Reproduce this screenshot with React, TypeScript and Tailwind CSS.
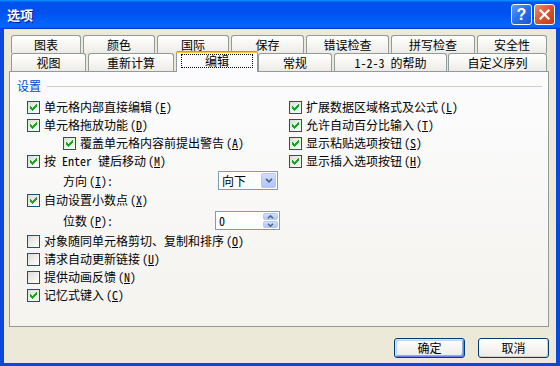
import type { ReactNode } from "react";

const checkPixels = ["......#", ".....##", "#...###", "##.###.", "#####..", ".###...", "..#...."];

function Check() {
  return (
    <svg width="7" height="7" viewBox="0 0 7 7" shapeRendering="crispEdges">
      {checkPixels.flatMap((row, y) =>
        row.split("").map((c, x) =>
          c === "#" ? <rect key={`${x}-${y}`} x={x} y={y} width="1" height="1" fill="#21A121" /> : null,
        ),
      )}
    </svg>
  );
}

function Box({ on }: { on?: boolean }) {
  return (
    <span className="flex h-[13px] w-[13px] shrink-0 items-center justify-center border border-[#1C5180] bg-gradient-to-br from-[#DCDCD7] to-white">
      {on && <Check />}
    </span>
  );
}

function Key({ k, colon }: { k: string; colon?: boolean }) {
  return (
    <span className="ml-[2px]">
      (<span className="underline underline-offset-1">{k}</span>){colon ? ":" : ""}
    </span>
  );
}

function Item({ on, text, k, className = "" }: { on?: boolean; text: string; k: string; className?: string }) {
  return (
    <div className={`flex h-[18px] items-center ${className}`}>
      <Box on={on} />
      <span className="ml-[4px] whitespace-nowrap">
        {text}
        <Key k={k} />
      </span>
    </div>
  );
}

function Tab({ children, className = "" }: { children: ReactNode; className?: string }) {
  return (
    <div
      className={`flex h-full items-center justify-center rounded-t-[3px] border border-b-0 border-[#919B9C] bg-gradient-to-b from-white via-[#F7F6F2] to-[#ECEBE6] ${className}`}
    >
      {children}
    </div>
  );
}

function Button({ children, def }: { children: ReactNode; def?: boolean }) {
  return (
    <div
      className={`flex h-[20px] w-[71px] items-center justify-center rounded-[3px] border border-[#003C74] bg-gradient-to-b from-white to-[#ECEBE6] ${
        def
          ? "shadow-[inset_1px_1px_0_0_#CEE7FF,inset_-1px_-1px_0_0_#6982EE,inset_2px_2px_0_0_#BCD4F6,inset_-2px_-2px_0_0_#89ADE4]"
          : "shadow-[inset_-1px_-1px_0_0_#D6D0C5]"
      }`}
    >
      {children}
    </div>
  );
}

export default function App() {
  return (
    <div className="flex h-[366px] w-[560px] flex-col bg-[#0848DC] font-['Noto_Sans_Mono_CJK_SC','Noto_Sans_CJK_SC',sans-serif] text-[12px] leading-none text-black">
      {/* title bar */}
      <div className="flex h-[29px] shrink-0 items-center bg-[linear-gradient(180deg,#0997FF,#0053EE_8%,#0050EE_40%,#0066FF_88%,#0066FF_93%,#005BFF_95%,#003DD7_96%,#003DD7)] pl-[7px] pr-[5px]">
        <span className="text-[13px] font-bold text-white [text-shadow:1px_1px_0_#0F1089]">选项</span>
        <div className="ml-auto flex gap-[2px]">
          <div className="flex h-[21px] w-[21px] items-center justify-center rounded-[3px] border border-white bg-gradient-to-br from-[#5A9BFF] via-[#2A6EEA] to-[#1E55D0] font-['Liberation_Sans',sans-serif] text-[16px] font-bold text-white">
            ?
          </div>
          <div className="flex h-[21px] w-[21px] items-center justify-center rounded-[3px] border border-white bg-gradient-to-br from-[#E98E70] via-[#D9532C] to-[#C1391A]">
            <svg width="11" height="11" viewBox="0 0 11 11">
              <path d="M1.5 1.5 L9.5 9.5 M9.5 1.5 L1.5 9.5" stroke="white" strokeWidth="2.2" strokeLinecap="square" />
            </svg>
          </div>
        </div>
      </div>

      {/* client area */}
      <div className="mx-[4px] mb-[3px] flex flex-1 flex-col bg-[#ECE9D8] pt-[6px]">
        <div className="ml-[7px] flex h-[18px] gap-[2px]">
          <Tab className="w-[70px]">图表</Tab>
          <Tab className="w-[72px]">颜色</Tab>
          <Tab className="w-[72px]">国际</Tab>
          <Tab className="w-[73px]">保存</Tab>
          <Tab className="w-[83px]">错误检查</Tab>
          <Tab className="w-[84px]">拼写检查</Tab>
          <Tab className="w-[70px]">安全性</Tab>
        </div>
        <div className="ml-[7px] flex h-[18px]">
          <Tab className="w-[75px]">视图</Tab>
          <Tab className="ml-[2px] w-[86px]">重新计算</Tab>
          <div className="relative z-10 -mt-[2px] ml-[2px] flex h-[21px] w-[82px] flex-col rounded-t-[3px] border-x border-[#919B9C] bg-[#FCFCFE]">
            <div className="-mx-px h-[3px] rounded-t-[3px] border-t border-[#E68B2C] bg-[#FFC83C]" />
            <div className="flex flex-1 px-[4px] pb-[4px] pt-[1px]">
              <div className="flex flex-1 items-center justify-center border border-dotted border-black">编辑</div>
            </div>
          </div>
          <Tab className="w-[74px]">常规</Tab>
          <Tab className="ml-[2px] w-[113px]">1-2-3 的帮助</Tab>
          <Tab className="ml-px w-[99px]">自定义序列</Tab>
        </div>

        {/* panel */}
        <div className="ml-[5px] h-[256px] w-[540px] border border-[#919B9C] bg-gradient-to-b from-[#FCFCFE] to-[#F4F3EE] pt-[7px]">
          <div className="flex h-[14px] items-center">
            <span className="ml-[7px] text-[#0046D5]">设置</span>
            <div className="ml-[6px] mr-[6px] h-px flex-1 bg-[#D0D0BF]" />
          </div>

          <div className="mt-[5px] flex pl-[17px]">
            <div className="flex w-[262px] flex-col">
              <Item on text="单元格内部直接编辑" k="E" />
              <Item on text="单元格拖放功能" k="D" />
              <Item on text="覆盖单元格内容前提出警告" k="A" className="pl-[36px]" />
              <Item on text="按 Enter 键后移动" k="M" />
              <div className="flex h-[21px] items-center pl-[36px]">
                <span className="w-[155px] whitespace-nowrap">
                  方向<Key k="I" colon />
                </span>
                <div className="flex h-[19px] w-[60px] items-center justify-between border border-[#7F9DB9] bg-white">
                  <span className="pl-[3px]">向下</span>
                  <span className="mr-px flex h-[15px] w-[15px] items-center justify-center rounded-[2px] border border-[#B4C8F5] bg-gradient-to-b from-[#D2DFFD] to-[#B0C5F7]">
                    <svg width="8" height="5" viewBox="0 0 8 5">
                      <path d="M1 0.8 L4 3.8 L7 0.8" fill="none" stroke="#4D6185" strokeWidth="1.7" />
                    </svg>
                  </span>
                </div>
              </div>
              <Item on text="自动设置小数点" k="X" />
              <div className="flex h-[23px] items-center pl-[36px]">
                <span className="w-[152px] whitespace-nowrap">
                  位数<Key k="P" colon />
                </span>
                <div className="flex h-[19px] w-[65px] items-center justify-between border border-[#7F9DB9] bg-white">
                  <span className="pl-[3px]">0</span>
                  <span className="mr-px flex h-[15px] w-[15px] flex-col gap-px">
                    <span className="flex flex-1 items-center justify-center rounded-[2px] border border-[#B4C8F5] bg-gradient-to-b from-[#D2DFFD] to-[#B0C5F7]">
                      <svg width="7" height="4" viewBox="0 0 7 4">
                        <path d="M1 3.3 L3.5 0.8 L6 3.3" fill="none" stroke="#4D6185" strokeWidth="1.5" />
                      </svg>
                    </span>
                    <span className="flex flex-1 items-center justify-center rounded-[2px] border border-[#B4C8F5] bg-gradient-to-b from-[#D2DFFD] to-[#B0C5F7]">
                      <svg width="7" height="4" viewBox="0 0 7 4">
                        <path d="M1 0.7 L3.5 3.2 L6 0.7" fill="none" stroke="#4D6185" strokeWidth="1.5" />
                      </svg>
                    </span>
                  </span>
                </div>
              </div>
              <Item text="对象随同单元格剪切、复制和排序" k="O" />
              <Item text="请求自动更新链接" k="U" />
              <Item text="提供动画反馈" k="N" />
              <Item on text="记忆式键入" k="C" />
            </div>

            <div className="flex flex-col">
              <Item on text="扩展数据区域格式及公式" k="L" />
              <Item on text="允许自动百分比输入" k="T" />
              <Item on text="显示粘贴选项按钮" k="S" />
              <Item on text="显示插入选项按钮" k="H" />
            </div>
          </div>
        </div>

        <div className="mr-[7px] mt-[11px] flex justify-end gap-[13px]">
          <Button def>确定</Button>
          <Button>取消</Button>
        </div>
      </div>
    </div>
  );
}
